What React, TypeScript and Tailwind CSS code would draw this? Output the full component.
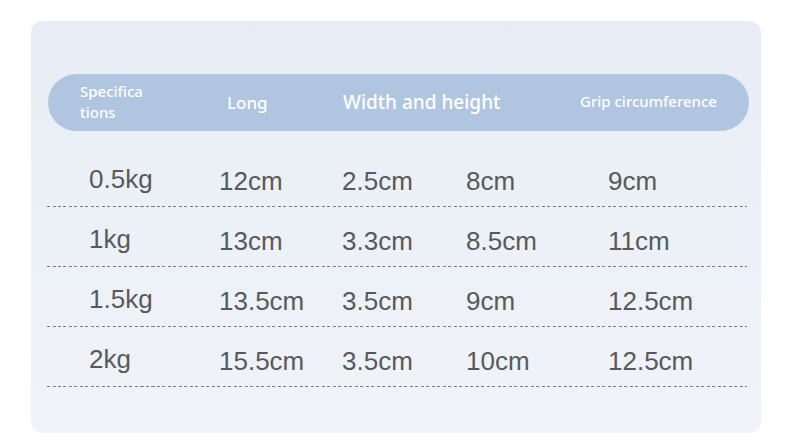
const rows = [
  ["0.5kg", "12cm", "2.5cm", "8cm", "9cm"],
  ["1kg", "13cm", "3.3cm", "8.5cm", "11cm"],
  ["1.5kg", "13.5cm", "3.5cm", "9cm", "12.5cm"],
  ["2kg", "15.5cm", "3.5cm", "10cm", "12.5cm"],
];

const App = () => {
  return (
    <main className="w-[790px] h-[440px] bg-white pl-[31px] pt-[21px]">
      <div className="w-[730px] h-[412px] rounded-[12px] bg-gradient-to-b from-[#e8edf5] to-[#f0f4f9] pt-[53px] pl-[16px] pr-[14px]">
        {/* Header */}
        <div
          className="ml-[1px] mr-[-2px] h-[57px] rounded-full bg-[#b0c5e0] flex items-center text-white font-medium"
          style={{ fontFamily: '"Noto Sans", "Open Sans", sans-serif' }}
        >
          <div className="w-[179px] pl-[32px] text-[15px] leading-[20.5px] pb-[2px]">
            <div>Specifica</div>
            <div>tions</div>
          </div>
          <div className="w-[116px] text-[17px]">Long</div>
          <div className="w-[237px] text-[19px]">Width and height</div>
          <div className="text-[15px] pb-[2px]">Grip circumference</div>
        </div>

        {/* Rows */}
        <div className="mt-[16px]" style={{ fontFamily: '"Liberation Sans", Arial, sans-serif' }}>
          {rows.map((r) => (
            <div key={r[0]}>
              <div className="h-[59px] grid grid-cols-[130px_123px_124px_142px_1fr] items-center pl-[42px] pt-[10px] text-[26px] text-[#58595b]">
                <span className="mb-[4px]">{r[0]}</span>
                <span>{r[1]}</span>
                <span>{r[2]}</span>
                <span>{r[3]}</span>
                <span>{r[4]}</span>
              </div>
              <div className="h-px bg-[repeating-linear-gradient(90deg,#7c7c7c_0_3px,transparent_3px_5.5px)]" />
            </div>
          ))}
        </div>
      </div>
    </main>
  );
};

export default App;
